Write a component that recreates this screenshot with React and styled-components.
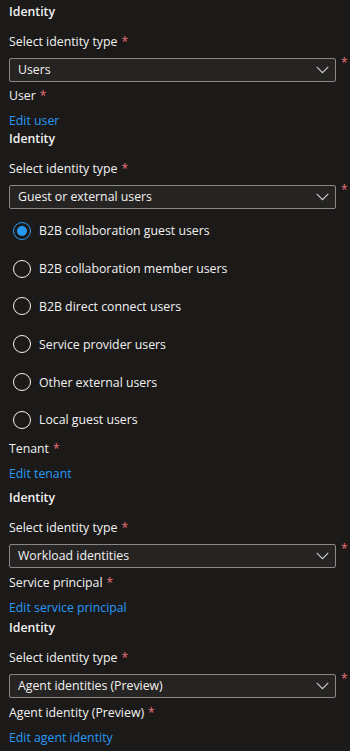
import React from "react";
import styled, { createGlobalStyle } from "styled-components";

const GlobalStyle = createGlobalStyle`
  html, body {
    margin: 0;
    padding: 0;
    background: #1b1a19;
  }
  body {
    font-family: "Segoe UI", "Open Sans", "Noto Sans", sans-serif;
    color: #f3f2f1;
    -webkit-font-smoothing: antialiased;
  }
`;

const Page = styled.main`
  width: 350px;
  min-height: 751px;
  box-sizing: border-box;
  padding: 3px 0 0 9px;
  overflow: hidden;
  background: #1b1a19;
`;

const Section = styled.section`
  display: flex;
  flex-direction: column;
  margin-top: ${(p) => p.$gap || 0}px;
`;

const Title = styled.h3`
  margin: 0;
  font-size: 12.3px;
  font-weight: 600;
  line-height: 18px;
  color: #f3f2f1;
`;

const Label = styled.label`
  display: block;
  margin-top: ${(p) => p.$mt}px;
  font-size: 12.3px;
  line-height: 18px;
  color: #f3f2f1;
`;

const Req = styled.span`
  color: #f1707b;
  margin-left: 4px;
  font-size: 12px;
`;

const SelectRow = styled.div`
  display: flex;
  align-items: flex-start;
  margin-top: 7px;
`;

const SelectBox = styled.div`
  width: 327px;
  height: 24px;
  box-sizing: border-box;
  border: 1px solid #8a8886;
  border-radius: 2px;
  background: #252423;
  display: flex;
  align-items: center;
  justify-content: space-between;
  padding: 0 6px 0 8px;
  font-size: 12.3px;
  line-height: 18px;
  color: #f3f2f1;
`;

const SelectReq = styled.span`
  color: #f1707b;
  margin-left: 5px;
  font-size: 12px;
  line-height: 12px;
  margin-top: -1px;
`;

const RadioList = styled.div`
  display: flex;
  flex-direction: column;
  margin-top: 3px;
`;

const RadioRow = styled.div`
  display: flex;
  align-items: center;
  gap: 8px;
  height: 37.8px;
  padding-left: 4px;
  font-size: 12.3px;
  color: #f3f2f1;
`;

const RadioCircle = styled.span`
  width: 18px;
  height: 18px;
  box-sizing: border-box;
  border-radius: 50%;
  border: 1px solid ${(p) => (p.$checked ? "#2899f5" : "#f3f2f1")};
  display: flex;
  align-items: center;
  justify-content: center;
  flex: none;
`;

const RadioDot = styled.span`
  width: 10px;
  height: 10px;
  border-radius: 50%;
  background: #2899f5;
`;

const Link = styled.a`
  display: block;
  margin-top: 7px;
  font-size: 12.3px;
  line-height: 18px;
  color: #2899f5;
  text-decoration: none;
  cursor: pointer;
`;

const Chevron = () => (
  <svg width="13" height="8" viewBox="0 0 13 8" fill="none">
    <path d="M0.7 0.9 L6.5 6.7 L12.3 0.9" stroke="#d2d0ce" strokeWidth="1.1" />
  </svg>
);

const Select = ({ value }) => (
  <SelectRow>
    <SelectBox>
      <span>{value}</span>
      <Chevron />
    </SelectBox>
    <SelectReq>*</SelectReq>
  </SelectRow>
);

const radios = [
  "B2B collaboration guest users",
  "B2B collaboration member users",
  "B2B direct connect users",
  "Service provider users",
  "Other external users",
  "Local guest users",
];

const IdentitySection = ({ gap, value, children }) => (
  <Section $gap={gap}>
    <Title>Identity</Title>
    <Label $mt={12}>
      Select identity type<Req>*</Req>
    </Label>
    <Select value={value} />
    {children}
  </Section>
);

export default function App() {
  return (
    <>
      <GlobalStyle />
      <Page>
        <IdentitySection gap={0} value="Users">
          <Label $mt={5}>
            User<Req>*</Req>
          </Label>
          <Link>Edit user</Link>
        </IdentitySection>

        <IdentitySection gap={0} value="Guest or external users">
          <RadioList>
            {radios.map((r, i) => (
              <RadioRow key={r}>
                <RadioCircle $checked={i === 0}>{i === 0 && <RadioDot />}</RadioCircle>
                <span>{r}</span>
              </RadioRow>
            ))}
          </RadioList>
          <Label $mt={1}>
            Tenant<Req>*</Req>
          </Label>
          <Link>Edit tenant</Link>
        </IdentitySection>

        <IdentitySection gap={6} value="Workload identities">
          <Label $mt={6}>
            Service principal<Req>*</Req>
          </Label>
          <Link>Edit service principal</Link>
        </IdentitySection>

        <IdentitySection gap={2} value="Agent identities (Preview)">
          <Label $mt={6}>
            Agent identity (Preview)<Req>*</Req>
          </Label>
          <Link>Edit agent identity</Link>
        </IdentitySection>
      </Page>
    </>
  );
}
